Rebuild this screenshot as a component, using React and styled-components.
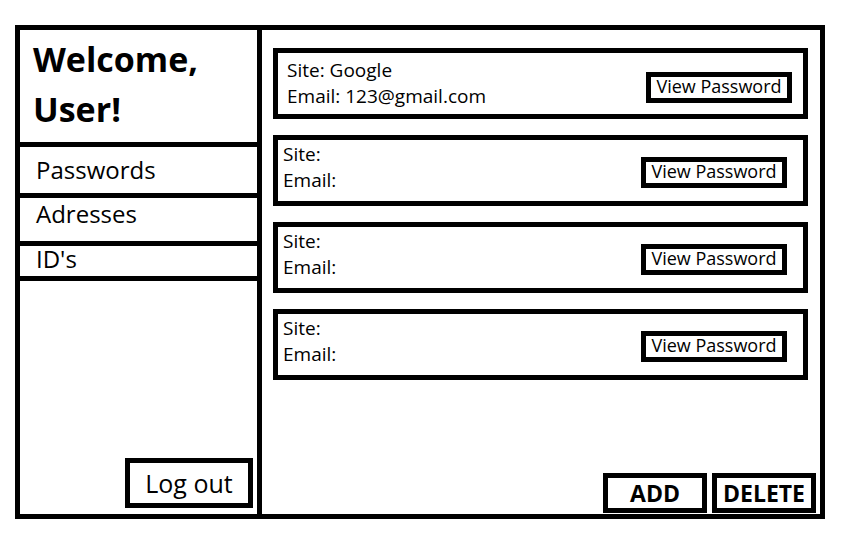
import styled, { createGlobalStyle } from 'styled-components';

const GlobalStyle = createGlobalStyle`
  body {
    margin: 0;
    background: #fff;
    font-family: 'Open Sans', 'Noto Sans', sans-serif;
    color: #000;
  }
`;

const entries = [
  { site: 'Google', email: '123@gmail.com' },
  { site: '', email: '' },
  { site: '', email: '' },
  { site: '', email: '' },
];

const navItems = [
  { label: 'Passwords', h: 46, pt: 11 },
  { label: 'Adresses', h: 43, pt: 4 },
  { label: "ID's", h: 30, pt: 1 },
];

function App() {
  return (
    <Page>
      <GlobalStyle />
      <Frame>
        <Sidebar>
          <Welcome>
            Welcome,
            <br />
            User!
          </Welcome>
          <Nav>
            {navItems.map((item) => (
              <NavItem key={item.label} $h={item.h} $pt={item.pt}>
                {item.label}
              </NavItem>
            ))}
          </Nav>
          <SidebarFooter>
            <LogoutButton>Log out</LogoutButton>
          </SidebarFooter>
        </Sidebar>

        <Main>
          <CardList>
            {entries.map((entry, i) => (
              <Card key={i} $first={i === 0}>
                <Details>
                  <Line>Site: {entry.site}</Line>
                  <Line>Email: {entry.email}</Line>
                </Details>
                <ViewButton>View Password</ViewButton>
              </Card>
            ))}
          </CardList>
          <Actions>
            <ActionButton>ADD</ActionButton>
            <ActionButton>DELETE</ActionButton>
          </Actions>
        </Main>
      </Frame>
    </Page>
  );
}

const Page = styled.div`
  padding: 25px 0 0 15px;
`;

const Frame = styled.div`
  box-sizing: border-box;
  width: 810px;
  height: 494px;
  border: 5px solid #000;
  display: flex;
`;

const Sidebar = styled.aside`
  box-sizing: border-box;
  width: 242px;
  border-right: 5px solid #000;
  display: flex;
  flex-direction: column;
`;

const Welcome = styled.h1`
  box-sizing: border-box;
  height: 112px;
  margin: 0;
  padding: 4px 0 0 13px;
  font-size: 34px;
  font-weight: 700;
  line-height: 50px;
`;

const Nav = styled.nav`
  display: flex;
  flex-direction: column;
  border-bottom: 5px solid #000;
`;

const NavItem = styled.div`
  height: ${(p) => p.$h - p.$pt}px;
  padding: ${(p) => p.$pt}px 0 0 16px;
  border-top: 5px solid #000;
  font-size: 24px;
  line-height: 24px;
`;

const SidebarFooter = styled.div`
  margin-top: auto;
  display: flex;
  justify-content: flex-end;
  padding: 0 4px 6px 0;
`;

const LogoutButton = styled.div`
  box-sizing: border-box;
  width: 128px;
  height: 50px;
  border: 5px solid #000;
  display: flex;
  align-items: center;
  justify-content: center;
  font-size: 25px;
`;

const Main = styled.main`
  flex: 1;
  display: flex;
  flex-direction: column;
  padding: 18px 0 1px 0;
`;

const CardList = styled.div`
  display: flex;
  flex-direction: column;
  gap: 16px;
  padding: 0 12px 0 11px;
`;

const Card = styled.div`
  box-sizing: border-box;
  height: 71px;
  border: 5px solid #000;
  display: flex;
  align-items: flex-start;
  justify-content: space-between;
  padding: ${(p) => (p.$first ? '4px 11px 0 9px' : '1px 16px 0 5px')};
`;

const Details = styled.div`
  display: flex;
  flex-direction: column;
`;

const Line = styled.div`
  font-size: 19px;
  line-height: 26px;
`;

const ViewButton = styled.div`
  box-sizing: border-box;
  align-self: center;
  margin-top: 3px;
  width: 146px;
  height: 31px;
  border: 5px solid #000;
  display: flex;
  align-items: center;
  justify-content: center;
  padding-bottom: 3px;
  font-size: 18px;
  line-height: 1;
`;

const Actions = styled.div`
  margin-top: auto;
  display: flex;
  justify-content: flex-end;
  gap: 5px;
  padding-right: 4px;
`;

const ActionButton = styled.div`
  box-sizing: border-box;
  width: 104px;
  height: 40px;
  border: 5px solid #000;
  display: flex;
  align-items: center;
  justify-content: center;
  font-size: 23px;
  font-weight: 700;
`;

export default App;
